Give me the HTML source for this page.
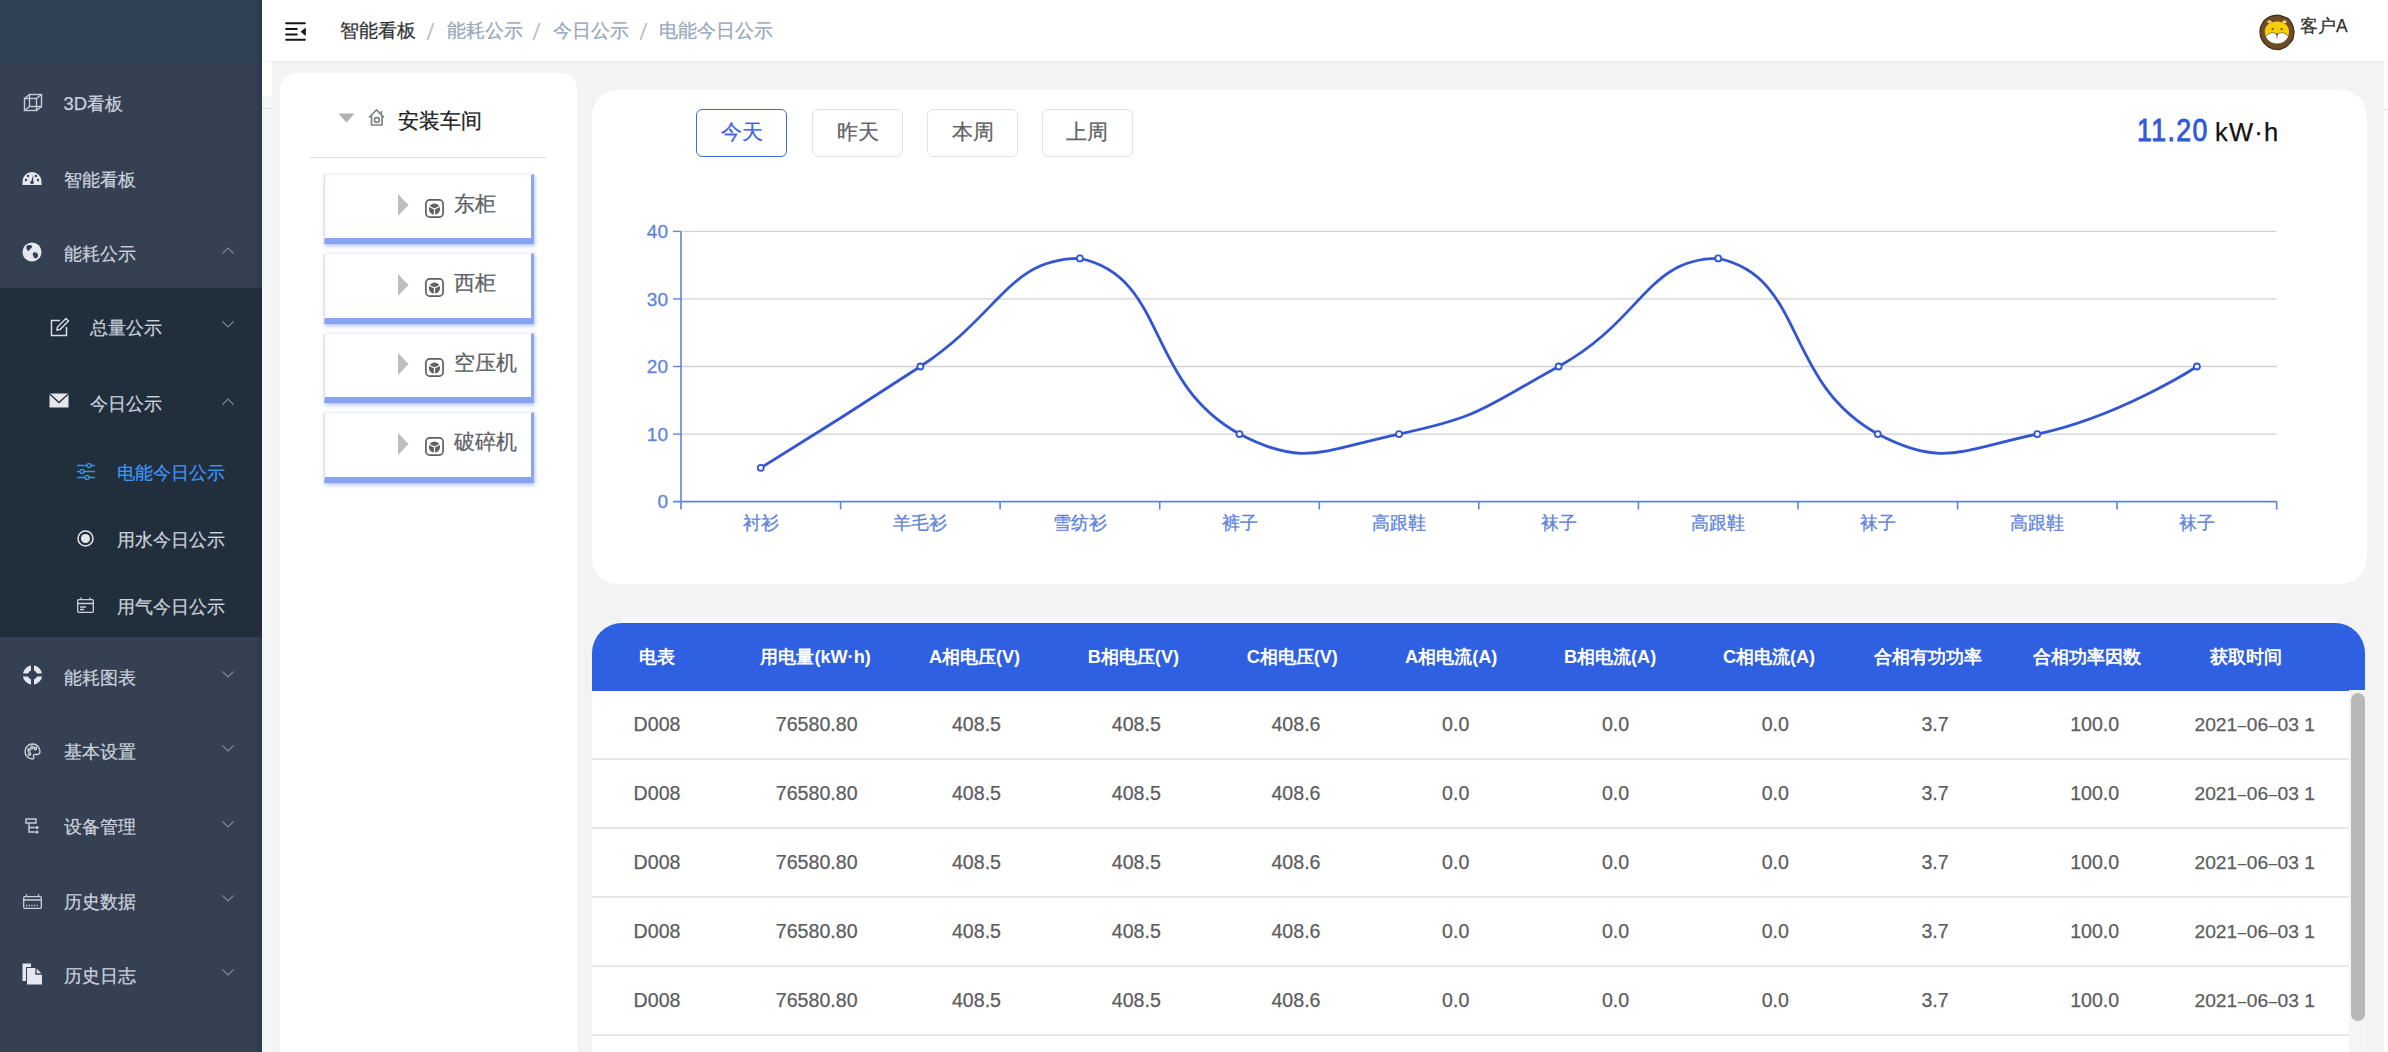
<!DOCTYPE html>
<html><head><meta charset="utf-8">
<style>
*{margin:0;padding:0;box-sizing:border-box}
html,body{width:2388px;height:1052px;overflow:hidden;background:#f3f3f3;font-family:"Liberation Sans",sans-serif}
body div{-webkit-text-stroke:0.25px currentColor}
.abs{position:absolute}
#side{position:absolute;left:0;top:0;width:262px;height:1052px;background:#354052;overflow:hidden}
#logo{position:absolute;left:0;top:0;width:262px;height:64px;background:#304156}
#sbr{position:absolute;left:256px;top:0;width:6px;height:1052px;background:linear-gradient(90deg,#2f3f57 0,#2f3f57 33%,#2e3b4a 34%,#2e3b4a 100%)}
#sub{position:absolute;left:0;top:287.5px;width:262px;height:349px;background:#212e3c}
#subr{position:absolute;left:256px;top:287.5px;width:6px;height:349px;background:#262c3c}
.mt{position:absolute;font-size:18.4px;line-height:25px;white-space:nowrap}
#header{position:absolute;left:262px;top:0;width:2126px;height:61px;background:#fff;box-shadow:0 1px 3px rgba(0,21,41,0.05)}
.bc{position:absolute;top:18px;font-size:18.67px;line-height:25px;white-space:nowrap;color:#97a8be}
.card{position:absolute;background:#fff}
.node{position:absolute;left:324px;width:210px;height:70.5px;background:#fff;border-left:1px solid #d6d8f5;border-top:1px solid #f0f0f2;border-right:3px solid #8ba5f3;border-bottom:6px solid #86a2f1;box-shadow:1px 2px 4px rgba(110,145,240,0.55)}
.nt{position:absolute;left:454px;font-size:21.33px;line-height:28px;color:#606266;white-space:nowrap}
.btn{position:absolute;top:108.5px;width:91px;height:48.5px;border:1.5px solid #e1e2e5;border-radius:6px;background:#fff;font-size:21.33px;line-height:45px;text-align:center;color:#606266}
.btn.on{border:1.8px solid #4169dd;color:#3d64dc;line-height:44.9px}
.chart{position:absolute;left:0;top:0}
.yl{font-size:19px;fill:#5f84dc;stroke:#5f84dc;stroke-width:0.3px;text-anchor:end;font-family:"Liberation Sans",sans-serif}
.xl{font-size:18px;fill:#5f84dc;stroke:#5f84dc;stroke-width:0.3px;text-anchor:middle;font-family:"Liberation Sans",sans-serif}
#thead{position:absolute;left:592px;top:623.4px;width:1773px;height:67.5px;background:#2f60e1;border-radius:30px 30px 0 0}
.th{position:absolute;top:644.5px;width:159px;text-align:center;font-size:18.1px;line-height:25px;font-weight:bold;color:#fff;white-space:nowrap;-webkit-text-stroke:0}
.td{position:absolute;width:159px;text-align:center;font-size:19.6px;line-height:25px;color:#5c5d60;white-space:nowrap}
.dash{font-size:15px;margin:0 0.6px;position:relative;top:-1px}
.rline{position:absolute;left:592px;width:1757px;height:1.6px;background:#e8e8e9}
</style></head><body>
<div id="side">
<div id="logo"></div>
<div id="sbr"></div>
<div id="sub"></div>
<div id="subr"></div>
<div class="mt" style="left:63.5px;top:90.5px;color:#c9d1dc">3D看板</div>
<div class="abs" style="left:23.0px;top:93.0px;line-height:0"><svg width="20" height="20" viewBox="0 0 20 20"><g fill="none" stroke="#c5ceda" stroke-width="1.4"><rect x="1.5" y="5.5" width="12" height="12"/><rect x="6.5" y="1.5" width="12" height="12"/><path d="M1.5 5.5 L6.5 1.5 M13.5 5.5 L18.5 1.5 M1.5 17.5 L6.5 13.5 M13.5 17.5 L18.5 13.5"/></g></svg></div>
<div class="mt" style="left:63.5px;top:167.0px;color:#c9d1dc">智能看板</div>
<div class="abs" style="left:22.0px;top:171.0px;line-height:0"><svg width="20" height="16" viewBox="0 0 20 16"><path d="M10 1 A9.5 9.5 0 0 0 0.5 10.5 L0.5 14 L19.5 14 L19.5 10.5 A9.5 9.5 0 0 0 10 1 Z" fill="#e4e8ee"/><g fill="#354052"><circle cx="4" cy="9" r="1.2"/><circle cx="6" cy="5" r="1.2"/><circle cx="14" cy="5" r="1.2"/><circle cx="16" cy="9" r="1.2"/><path d="M11.5 3.5 L9 11 L11 11.5 Z"/><circle cx="10" cy="11.5" r="1.8"/></g></svg></div>
<div class="mt" style="left:63.5px;top:240.5px;color:#c9d1dc">能耗公示</div>
<div class="abs" style="left:22.0px;top:242.0px;line-height:0"><svg width="20" height="20" viewBox="0 0 20 20"><circle cx="10" cy="10" r="9.5" fill="#e4e8ee"/><path d="M4.5 4 C6 2.5 9 2.5 10 4 C10.5 5.5 8.5 6.5 7.5 8 C6.5 9.5 5 8.5 4.5 7 Z M11.5 10.5 C13.5 9.5 16.5 11 16 14 C15.5 16.5 13 17 12 15.5 C11 14 10 11.5 11.5 10.5 Z" fill="#354052"/></svg></div>
<svg class="abs" style="left:221px;top:246.0px" width="14" height="9"><path d="M1.5 7.5 L7 2 L12.5 7.5" fill="none" stroke="#7d8899" stroke-width="1.2"/></svg>
<div class="mt" style="left:89.5px;top:314.5px;color:#c9d1dc">总量公示</div>
<div class="abs" style="left:49.5px;top:317.0px;line-height:0"><svg width="20" height="20" viewBox="0 0 20 20"><g fill="none" stroke="#d5dce5" stroke-width="1.5"><path d="M10 3.5 H1.5 V18.5 H16.5 V10"/><path d="M7 13 L7.5 10 L16 1.5 L18.5 4 L10 12.5 Z"/></g></svg></div>
<svg class="abs" style="left:221px;top:320.0px" width="14" height="9"><path d="M1.5 1.5 L7 7 L12.5 1.5" fill="none" stroke="#7d8899" stroke-width="1.2"/></svg>
<div class="mt" style="left:89.5px;top:391.0px;color:#c9d1dc">今日公示</div>
<div class="abs" style="left:49.0px;top:393.0px;line-height:0"><svg width="20" height="15" viewBox="0 0 20 15"><path d="M0.5 0.5 H19.5 V14.5 H0.5 Z" fill="#e4e8ee"/><path d="M0.5 0.8 L10 9.5 L19.5 0.8" fill="none" stroke="#212e3c" stroke-width="1.3"/></svg></div>
<svg class="abs" style="left:221px;top:396.5px" width="14" height="9"><path d="M1.5 7.5 L7 2 L12.5 7.5" fill="none" stroke="#7d8899" stroke-width="1.2"/></svg>
<div class="mt" style="left:116.5px;top:459.5px;color:#3d95f2">电能今日公示</div>
<div class="abs" style="left:75.5px;top:463.0px;line-height:0"><svg width="20" height="17" viewBox="0 0 20 17"><g stroke="#3a8ff0" stroke-width="1.4" fill="#212e3c"><path d="M1 2.5 H19 M1 8.5 H19 M1 14.5 H19"/><circle cx="13" cy="2.5" r="2"/><circle cx="6" cy="8.5" r="2"/><circle cx="11" cy="14.5" r="2"/></g></svg></div>
<div class="mt" style="left:116.5px;top:526.5px;color:#c9d1dc">用水今日公示</div>
<div class="abs" style="left:77.0px;top:530.0px;line-height:0"><svg width="17" height="17" viewBox="0 0 17 17"><circle cx="8.5" cy="8.5" r="7.5" fill="none" stroke="#e4e8ee" stroke-width="1.5"/><circle cx="8.5" cy="8.5" r="4.5" fill="#e4e8ee"/></svg></div>
<div class="mt" style="left:116.5px;top:593.5px;color:#c9d1dc">用气今日公示</div>
<div class="abs" style="left:77.0px;top:597.0px;line-height:0"><svg width="17" height="16" viewBox="0 0 17 16"><g fill="none" stroke="#c8d0dc" stroke-width="1.3"><rect x="0.7" y="2.7" width="15.6" height="12.6" rx="1"/><path d="M0.7 6.5 H16.3 M3 10 H9 M3 12.5 H7 M4 0.5 V3 M13 0.5 V3"/></g></svg></div>
<div class="mt" style="left:63.5px;top:664.5px;color:#c9d1dc">能耗图表</div>
<div class="abs" style="left:21.5px;top:665.0px;line-height:0"><svg width="21" height="20" viewBox="0 0 21 20"><circle cx="10.5" cy="10" r="7.2" fill="none" stroke="#e4e8ee" stroke-width="5"/><path d="M10.5 0 V20 M0 10 H21" stroke="#354052" stroke-width="3"/></svg></div>
<svg class="abs" style="left:221px;top:670.0px" width="14" height="9"><path d="M1.5 1.5 L7 7 L12.5 1.5" fill="none" stroke="#7d8899" stroke-width="1.2"/></svg>
<div class="mt" style="left:63.5px;top:738.5px;color:#c9d1dc">基本设置</div>
<div class="abs" style="left:24.0px;top:742.5px;line-height:0"><svg width="17" height="17" viewBox="0 0 17 17"><g fill="none" stroke="#c8d0dc" stroke-width="1.4"><path d="M8.5 1 A7.5 7.5 0 1 0 8.5 16 C10 16 10 14.5 9.5 13.5 C9 12.5 10 11.5 11 11.5 H13 A3 3 0 0 0 16 8.5 A7.5 7.5 0 0 0 8.5 1 Z"/><circle cx="5" cy="7" r="1.2"/><circle cx="8" cy="4.5" r="1.2"/><circle cx="11.5" cy="5.5" r="1.2"/><circle cx="5.5" cy="11" r="1.2"/></g></svg></div>
<svg class="abs" style="left:221px;top:744.0px" width="14" height="9"><path d="M1.5 1.5 L7 7 L12.5 1.5" fill="none" stroke="#7d8899" stroke-width="1.2"/></svg>
<div class="mt" style="left:63.5px;top:814.0px;color:#c9d1dc">设备管理</div>
<div class="abs" style="left:25.0px;top:818.0px;line-height:0"><svg width="16" height="17" viewBox="0 0 16 17"><g fill="none" stroke="#c8d0dc" stroke-width="1.4"><path d="M1 1 H11 V5 H1 Z"/><path d="M4 5 V14 H10 M4 9.5 H10"/></g><circle cx="12" cy="9.5" r="1.6" fill="#c8d0dc"/><circle cx="12" cy="14" r="1.6" fill="#c8d0dc"/></svg></div>
<svg class="abs" style="left:221px;top:819.5px" width="14" height="9"><path d="M1.5 1.5 L7 7 L12.5 1.5" fill="none" stroke="#7d8899" stroke-width="1.2"/></svg>
<div class="mt" style="left:63.5px;top:888.5px;color:#c9d1dc">历史数据</div>
<div class="abs" style="left:23.0px;top:894.0px;line-height:0"><svg width="19" height="15" viewBox="0 0 19 15"><g fill="none" stroke="#c8d0dc" stroke-width="1.3"><rect x="0.7" y="2.7" width="17.6" height="11.6" rx="1"/><path d="M0.7 6 H18.3 M3.5 0.3 V3 M15.5 0.3 V3"/><path d="M3 11.5 H16" stroke-dasharray="1.3 1.3"/></g></svg></div>
<svg class="abs" style="left:221px;top:894.0px" width="14" height="9"><path d="M1.5 1.5 L7 7 L12.5 1.5" fill="none" stroke="#7d8899" stroke-width="1.2"/></svg>
<div class="mt" style="left:63.5px;top:962.5px;color:#c9d1dc">历史日志</div>
<div class="abs" style="left:22.0px;top:963.0px;line-height:0"><svg width="21" height="22" viewBox="0 0 21 22"><path d="M0.5 0.5 H9 V4 H4 V18 H0.5 Z" fill="#e4e8ee"/><path d="M5 5 H14 L20 11 V21.5 H5 Z" fill="#e4e8ee"/><path d="M14 5 V11 H20" fill="none" stroke="#354052" stroke-width="1.3"/></svg></div>
<svg class="abs" style="left:221px;top:968.0px" width="14" height="9"><path d="M1.5 1.5 L7 7 L12.5 1.5" fill="none" stroke="#7d8899" stroke-width="1.2"/></svg>
</div>
<div class="abs" style="left:262px;top:61px;width:10px;height:35px;background:#fdfdfd"></div>
<div class="abs" style="left:262px;top:96px;width:10px;height:956px;background:#f5f6f8"></div>
<div class="abs" style="left:262px;top:107.5px;width:10px;height:1.2px;background:#d8dce3"></div>
<div class="abs" style="left:2384px;top:61px;width:4px;height:991px;background:#fff"></div>
<div class="abs" style="left:2384px;top:108.5px;width:4px;height:1.2px;background:#d8dce3"></div>
<div id="header">
<svg class="abs" style="left:23px;top:22px" width="22" height="19" viewBox="0 0 22 19"><g fill="#151515"><rect x="0.2" y="0.3" width="20.6" height="1.9" rx="0.9"/><rect x="0.2" y="6.1" width="12.6" height="1.9" rx="0.9"/><rect x="0.2" y="11.5" width="12.6" height="1.9" rx="0.9"/><rect x="0.2" y="16.8" width="20.6" height="1.9" rx="0.9"/><path d="M20.8 5.4 L15.6 9.7 L20.8 14 Z"/></g></svg>
</div>
<div class="bc" style="left:340px;color:#303133">智能看板</div>
<svg class="abs" style="left:420px;top:18px" width="20" height="26"><path d="M13.6 5 L7.4 22" stroke="#c0c4cc" stroke-width="2"/></svg>
<div class="bc" style="left:447px">能耗公示</div>
<svg class="abs" style="left:526px;top:18px" width="20" height="26"><path d="M13.6 5 L7.4 22" stroke="#c0c4cc" stroke-width="2"/></svg>
<div class="bc" style="left:552.5px">今日公示</div>
<svg class="abs" style="left:633px;top:18px" width="20" height="26"><path d="M13.6 5 L7.4 22" stroke="#c0c4cc" stroke-width="2"/></svg>
<div class="bc" style="left:659px">电能今日公示</div>
<svg class="abs" style="left:2258px;top:14px" width="38" height="38" viewBox="0 0 38 38">
<path d="M19 1.2 C22 1 24 2.5 26.5 3 C29 3.5 31.5 5.5 33 8 C34.5 10.5 35.5 12.5 35.5 15 C36.5 17 36 19.5 35.5 21.5 C35.5 24.5 34 27 32 29 C30 31.5 27.5 33.5 24.5 34.5 C22.5 35.5 20.5 36 18.5 35.5 C15.5 35.5 13 34.5 10.5 33 C8 31.5 5.5 29 4 26 C2.5 23.5 2 21 2.2 18.5 C1.5 15.5 2.5 12.5 4 10 C5.5 7 8 4.5 11 3 C13.5 1.8 16 1.5 19 1.2 Z" fill="#6f4c29" stroke="#3e2a16" stroke-width="1.2"/>
<ellipse cx="11.5" cy="7.8" rx="2.2" ry="1.5" fill="#e9d27a"/><ellipse cx="26.5" cy="7.8" rx="2.2" ry="1.5" fill="#e9d27a"/>
<path d="M6.8 17.5 C6.8 11.5 12 7.6 19 7.6 C26 7.6 31 11.5 31 17.5 C31 25 26 29.8 19 29.8 C12 29.8 6.8 25 6.8 17.5 Z" fill="#f6cf00"/>
<path d="M7.6 22.5 C11 18.5 15 17.5 19 20.5 C23 17.5 27 18.5 30.4 22.5 C28 27.5 24 29.8 19 29.8 C14 29.8 10 27.5 7.6 22.5 Z" fill="#fff" stroke="#3f4a1a" stroke-width="0.6"/>
<circle cx="14.6" cy="15" r="1.1" fill="#6a3b10"/><circle cx="23.6" cy="15" r="1.1" fill="#6a3b10"/>
<circle cx="19" cy="20.6" r="1" fill="#333"/><path d="M19 21 V24.5" stroke="#777" stroke-width="1"/>
</svg>
<div class="abs" style="left:2300px;top:14px;font-size:17.5px;line-height:25px;color:#303133">客户A</div>

<div class="card" style="left:279.5px;top:73px;width:297px;height:1000px;border-radius:16px"></div>
<svg class="abs" style="left:337.5px;top:113px" width="18" height="10"><path d="M0.5 0.5 L16.5 0.5 L9.3 8.8 Q8.5 9.6 7.7 8.8 Z" fill="#b0b0b0"/></svg>
<svg class="abs" style="left:368px;top:108px" width="19" height="19" viewBox="0 0 19 19"><g fill="none" stroke="#808286" stroke-width="1.7"><path d="M1 9.5 L8.5 2 L16 9.5 M3.5 7.5 V17 H14 V7.5"/><circle cx="8.8" cy="12" r="2.4"/><path d="M13.3 3 V6.5"/></g></svg>
<div class="abs" style="left:398px;top:107px;font-size:21.33px;line-height:28px;color:#222;white-space:nowrap">安装车间</div>
<div class="abs" style="left:310px;top:156.5px;width:236px;height:1.4px;background:#dcdfe6"></div>
<div class="node" style="top:173.5px"></div>
<svg class="abs" style="left:398px;top:194.0px" width="11" height="22"><path d="M0 0 L10.5 11 L0 22 Z" fill="#bdbec2"/></svg>
<svg class="abs" style="left:425px;top:198.5px" width="19" height="19" viewBox="0 0 19 19"><rect x="0.9" y="0.9" width="17.2" height="17.2" rx="3.8" fill="none" stroke="#5f6064" stroke-width="1.7"/><circle cx="9.5" cy="10" r="5.6" fill="#5f6064"/><path d="M9.5 10 L9.5 16.5 M9.5 10 L3.8 7.2 M9.5 10 L15.2 7.2" stroke="#fff" stroke-width="1.2"/></svg>
<div class="nt" style="top:189.5px">东柜</div>
<div class="node" style="top:253.0px"></div>
<svg class="abs" style="left:398px;top:273.5px" width="11" height="22"><path d="M0 0 L10.5 11 L0 22 Z" fill="#bdbec2"/></svg>
<svg class="abs" style="left:425px;top:278.0px" width="19" height="19" viewBox="0 0 19 19"><rect x="0.9" y="0.9" width="17.2" height="17.2" rx="3.8" fill="none" stroke="#5f6064" stroke-width="1.7"/><circle cx="9.5" cy="10" r="5.6" fill="#5f6064"/><path d="M9.5 10 L9.5 16.5 M9.5 10 L3.8 7.2 M9.5 10 L15.2 7.2" stroke="#fff" stroke-width="1.2"/></svg>
<div class="nt" style="top:269.0px">西柜</div>
<div class="node" style="top:332.5px"></div>
<svg class="abs" style="left:398px;top:353.0px" width="11" height="22"><path d="M0 0 L10.5 11 L0 22 Z" fill="#bdbec2"/></svg>
<svg class="abs" style="left:425px;top:357.5px" width="19" height="19" viewBox="0 0 19 19"><rect x="0.9" y="0.9" width="17.2" height="17.2" rx="3.8" fill="none" stroke="#5f6064" stroke-width="1.7"/><circle cx="9.5" cy="10" r="5.6" fill="#5f6064"/><path d="M9.5 10 L9.5 16.5 M9.5 10 L3.8 7.2 M9.5 10 L15.2 7.2" stroke="#fff" stroke-width="1.2"/></svg>
<div class="nt" style="top:348.5px">空压机</div>
<div class="node" style="top:412.0px"></div>
<svg class="abs" style="left:398px;top:432.5px" width="11" height="22"><path d="M0 0 L10.5 11 L0 22 Z" fill="#bdbec2"/></svg>
<svg class="abs" style="left:425px;top:437.0px" width="19" height="19" viewBox="0 0 19 19"><rect x="0.9" y="0.9" width="17.2" height="17.2" rx="3.8" fill="none" stroke="#5f6064" stroke-width="1.7"/><circle cx="9.5" cy="10" r="5.6" fill="#5f6064"/><path d="M9.5 10 L9.5 16.5 M9.5 10 L3.8 7.2 M9.5 10 L15.2 7.2" stroke="#fff" stroke-width="1.2"/></svg>
<div class="nt" style="top:428.0px">破碎机</div>

<div class="card" style="left:592px;top:90px;width:1775px;height:494px;border-radius:26px"></div>
<div class="btn on" style="left:696px">今天</div>
<div class="btn" style="left:812px">昨天</div>
<div class="btn" style="left:927px">本周</div>
<div class="btn" style="left:1041.5px">上周</div>
<div class="abs" style="left:2136.5px;top:110.5px;font-size:31px;line-height:40px;color:#2f5ad8;-webkit-text-stroke:0.9px #2f5ad8;transform:scaleX(0.86);transform-origin:0 0;letter-spacing:1.6px">11.20</div>
<div class="abs" style="left:2215px;top:115px;font-size:25.5px;line-height:34px;color:#111;letter-spacing:1.2px">kW·h</div>
<svg class="chart" width="2388" height="1052" viewBox="0 0 2388 1052">
<line x1="681.0" y1="434.1" x2="2276.7" y2="434.1" stroke="#d2d2d2" stroke-width="1.4"/>
<line x1="673.0" y1="434.1" x2="681.0" y2="434.1" stroke="#6183dc" stroke-width="1.4"/>
<text x="668.0" y="440.7" class="yl">10</text>
<line x1="681.0" y1="366.5" x2="2276.7" y2="366.5" stroke="#d2d2d2" stroke-width="1.4"/>
<line x1="673.0" y1="366.5" x2="681.0" y2="366.5" stroke="#6183dc" stroke-width="1.4"/>
<text x="668.0" y="373.1" class="yl">20</text>
<line x1="681.0" y1="298.9" x2="2276.7" y2="298.9" stroke="#d2d2d2" stroke-width="1.4"/>
<line x1="673.0" y1="298.9" x2="681.0" y2="298.9" stroke="#6183dc" stroke-width="1.4"/>
<text x="668.0" y="305.6" class="yl">30</text>
<line x1="681.0" y1="231.4" x2="2276.7" y2="231.4" stroke="#d2d2d2" stroke-width="1.4"/>
<line x1="673.0" y1="231.4" x2="681.0" y2="231.4" stroke="#6183dc" stroke-width="1.4"/>
<text x="668.0" y="238.0" class="yl">40</text>
<text x="668.0" y="508.2" class="yl">0</text>
<line x1="681.0" y1="231.4" x2="681.0" y2="509.6" stroke="#6183dc" stroke-width="1.6"/>
<line x1="673.0" y1="501.6" x2="2276.7" y2="501.6" stroke="#6183dc" stroke-width="1.6"/>
<line x1="840.6" y1="501.6" x2="840.6" y2="509.6" stroke="#6183dc" stroke-width="1.6"/>
<line x1="1000.1" y1="501.6" x2="1000.1" y2="509.6" stroke="#6183dc" stroke-width="1.6"/>
<line x1="1159.7" y1="501.6" x2="1159.7" y2="509.6" stroke="#6183dc" stroke-width="1.6"/>
<line x1="1319.3" y1="501.6" x2="1319.3" y2="509.6" stroke="#6183dc" stroke-width="1.6"/>
<line x1="1478.8" y1="501.6" x2="1478.8" y2="509.6" stroke="#6183dc" stroke-width="1.6"/>
<line x1="1638.4" y1="501.6" x2="1638.4" y2="509.6" stroke="#6183dc" stroke-width="1.6"/>
<line x1="1798.0" y1="501.6" x2="1798.0" y2="509.6" stroke="#6183dc" stroke-width="1.6"/>
<line x1="1957.6" y1="501.6" x2="1957.6" y2="509.6" stroke="#6183dc" stroke-width="1.6"/>
<line x1="2117.1" y1="501.6" x2="2117.1" y2="509.6" stroke="#6183dc" stroke-width="1.6"/>
<line x1="2276.7" y1="501.6" x2="2276.7" y2="509.6" stroke="#6183dc" stroke-width="1.6"/>
<text x="760.8" y="529.0" class="xl">衬衫</text>
<text x="920.4" y="529.0" class="xl">羊毛衫</text>
<text x="1079.9" y="529.0" class="xl">雪纺衫</text>
<text x="1239.5" y="529.0" class="xl">裤子</text>
<text x="1399.1" y="529.0" class="xl">高跟鞋</text>
<text x="1558.6" y="529.0" class="xl">袜子</text>
<text x="1718.2" y="529.0" class="xl">高跟鞋</text>
<text x="1877.8" y="529.0" class="xl">袜子</text>
<text x="2037.3" y="529.0" class="xl">高跟鞋</text>
<text x="2196.9" y="529.0" class="xl">袜子</text>
<path d="M760.78 467.83 C760.78 467.83 841.34 418.34 920.36 366.50 C1000.91 313.64 1008.41 258.42 1079.92 258.42 C1167.98 277.06 1144.08 381.54 1239.49 434.05 C1303.65 467.83 1322.57 450.24 1399.07 434.05 C1482.14 416.47 1483.09 408.07 1558.63 366.50 C1642.66 320.26 1646.69 258.42 1718.20 258.42 C1806.26 277.06 1782.36 381.54 1877.77 434.05 C1941.93 467.83 1960.85 450.24 2037.35 434.05 C2120.42 416.47 2196.91 366.50 2196.91 366.50" fill="none" stroke="#3455d2" stroke-width="2.8" stroke-linejoin="round"/>
<circle cx="760.78" cy="467.83" r="3" fill="#fff" stroke="#3455d2" stroke-width="1.8"/>
<circle cx="920.36" cy="366.50" r="3" fill="#fff" stroke="#3455d2" stroke-width="1.8"/>
<circle cx="1079.92" cy="258.42" r="3" fill="#fff" stroke="#3455d2" stroke-width="1.8"/>
<circle cx="1239.49" cy="434.05" r="3" fill="#fff" stroke="#3455d2" stroke-width="1.8"/>
<circle cx="1399.07" cy="434.05" r="3" fill="#fff" stroke="#3455d2" stroke-width="1.8"/>
<circle cx="1558.63" cy="366.50" r="3" fill="#fff" stroke="#3455d2" stroke-width="1.8"/>
<circle cx="1718.20" cy="258.42" r="3" fill="#fff" stroke="#3455d2" stroke-width="1.8"/>
<circle cx="1877.77" cy="434.05" r="3" fill="#fff" stroke="#3455d2" stroke-width="1.8"/>
<circle cx="2037.35" cy="434.05" r="3" fill="#fff" stroke="#3455d2" stroke-width="1.8"/>
<circle cx="2196.91" cy="366.50" r="3" fill="#fff" stroke="#3455d2" stroke-width="1.8"/>
</svg>

<div class="abs" style="left:622px;top:616.5px;width:1714px;height:7px;background:#f9f9f9"></div>
<div class="card" style="left:592px;top:650px;width:1773px;height:410px"></div>
<div id="thead"></div>
<div class="th" style="left:577.2px">电表</div>
<div class="th" style="left:736.1px">用电量(kW·h)</div>
<div class="th" style="left:895.0px">A相电压(V)</div>
<div class="th" style="left:1053.9px">B相电压(V)</div>
<div class="th" style="left:1212.8px">C相电压(V)</div>
<div class="th" style="left:1371.7px">A相电流(A)</div>
<div class="th" style="left:1530.6px">B相电流(A)</div>
<div class="th" style="left:1689.5px">C相电流(A)</div>
<div class="th" style="left:1848.4px">合相有功功率</div>
<div class="th" style="left:2007.3px">合相功率因数</div>
<div class="th" style="left:2166.2px">获取时间</div>
<div class="rline" style="top:758.2px"></div>
<div class="td" style="left:577.5px;top:712.0px">D008</div>
<div class="td" style="left:737.2px;top:712.0px">76580.80</div>
<div class="td" style="left:897.0px;top:712.0px">408.5</div>
<div class="td" style="left:1056.8px;top:712.0px">408.5</div>
<div class="td" style="left:1216.5px;top:712.0px">408.6</div>
<div class="td" style="left:1376.2px;top:712.0px">0.0</div>
<div class="td" style="left:1536.0px;top:712.0px">0.0</div>
<div class="td" style="left:1695.8px;top:712.0px">0.0</div>
<div class="td" style="left:1855.5px;top:712.0px">3.7</div>
<div class="td" style="left:2015.2px;top:712.0px">100.0</div>
<div class="td" style="left:2194.5px;top:712.2px;width:124px;text-align:left;overflow:hidden;font-size:19.2px">2021<span class="dash">–</span>06<span class="dash">–</span>03 1</div>
<div class="rline" style="top:827.2px"></div>
<div class="td" style="left:577.5px;top:781.0px">D008</div>
<div class="td" style="left:737.2px;top:781.0px">76580.80</div>
<div class="td" style="left:897.0px;top:781.0px">408.5</div>
<div class="td" style="left:1056.8px;top:781.0px">408.5</div>
<div class="td" style="left:1216.5px;top:781.0px">408.6</div>
<div class="td" style="left:1376.2px;top:781.0px">0.0</div>
<div class="td" style="left:1536.0px;top:781.0px">0.0</div>
<div class="td" style="left:1695.8px;top:781.0px">0.0</div>
<div class="td" style="left:1855.5px;top:781.0px">3.7</div>
<div class="td" style="left:2015.2px;top:781.0px">100.0</div>
<div class="td" style="left:2194.5px;top:781.2px;width:124px;text-align:left;overflow:hidden;font-size:19.2px">2021<span class="dash">–</span>06<span class="dash">–</span>03 1</div>
<div class="rline" style="top:896.2px"></div>
<div class="td" style="left:577.5px;top:850.0px">D008</div>
<div class="td" style="left:737.2px;top:850.0px">76580.80</div>
<div class="td" style="left:897.0px;top:850.0px">408.5</div>
<div class="td" style="left:1056.8px;top:850.0px">408.5</div>
<div class="td" style="left:1216.5px;top:850.0px">408.6</div>
<div class="td" style="left:1376.2px;top:850.0px">0.0</div>
<div class="td" style="left:1536.0px;top:850.0px">0.0</div>
<div class="td" style="left:1695.8px;top:850.0px">0.0</div>
<div class="td" style="left:1855.5px;top:850.0px">3.7</div>
<div class="td" style="left:2015.2px;top:850.0px">100.0</div>
<div class="td" style="left:2194.5px;top:850.2px;width:124px;text-align:left;overflow:hidden;font-size:19.2px">2021<span class="dash">–</span>06<span class="dash">–</span>03 1</div>
<div class="rline" style="top:965.2px"></div>
<div class="td" style="left:577.5px;top:919.0px">D008</div>
<div class="td" style="left:737.2px;top:919.0px">76580.80</div>
<div class="td" style="left:897.0px;top:919.0px">408.5</div>
<div class="td" style="left:1056.8px;top:919.0px">408.5</div>
<div class="td" style="left:1216.5px;top:919.0px">408.6</div>
<div class="td" style="left:1376.2px;top:919.0px">0.0</div>
<div class="td" style="left:1536.0px;top:919.0px">0.0</div>
<div class="td" style="left:1695.8px;top:919.0px">0.0</div>
<div class="td" style="left:1855.5px;top:919.0px">3.7</div>
<div class="td" style="left:2015.2px;top:919.0px">100.0</div>
<div class="td" style="left:2194.5px;top:919.2px;width:124px;text-align:left;overflow:hidden;font-size:19.2px">2021<span class="dash">–</span>06<span class="dash">–</span>03 1</div>
<div class="rline" style="top:1034.2px"></div>
<div class="td" style="left:577.5px;top:988.0px">D008</div>
<div class="td" style="left:737.2px;top:988.0px">76580.80</div>
<div class="td" style="left:897.0px;top:988.0px">408.5</div>
<div class="td" style="left:1056.8px;top:988.0px">408.5</div>
<div class="td" style="left:1216.5px;top:988.0px">408.6</div>
<div class="td" style="left:1376.2px;top:988.0px">0.0</div>
<div class="td" style="left:1536.0px;top:988.0px">0.0</div>
<div class="td" style="left:1695.8px;top:988.0px">0.0</div>
<div class="td" style="left:1855.5px;top:988.0px">3.7</div>
<div class="td" style="left:2015.2px;top:988.0px">100.0</div>
<div class="td" style="left:2194.5px;top:988.2px;width:124px;text-align:left;overflow:hidden;font-size:19.2px">2021<span class="dash">–</span>06<span class="dash">–</span>03 1</div>
<div class="rline" style="top:1103.2px"></div>
<div class="td" style="left:577.5px;top:1057.0px">D008</div>
<div class="td" style="left:737.2px;top:1057.0px">76580.80</div>
<div class="td" style="left:897.0px;top:1057.0px">408.5</div>
<div class="td" style="left:1056.8px;top:1057.0px">408.5</div>
<div class="td" style="left:1216.5px;top:1057.0px">408.6</div>
<div class="td" style="left:1376.2px;top:1057.0px">0.0</div>
<div class="td" style="left:1536.0px;top:1057.0px">0.0</div>
<div class="td" style="left:1695.8px;top:1057.0px">0.0</div>
<div class="td" style="left:1855.5px;top:1057.0px">3.7</div>
<div class="td" style="left:2015.2px;top:1057.0px">100.0</div>
<div class="td" style="left:2194.5px;top:1057.2px;width:124px;text-align:left;overflow:hidden;font-size:19.2px">2021<span class="dash">–</span>06<span class="dash">–</span>03 1</div>
<div class="abs" style="left:2348.5px;top:689.7px;width:16.5px;height:370px;background:#f5f5f5"></div>
<div class="abs" style="left:2350.5px;top:693px;width:14px;height:328px;background:#b8b8b8;border-radius:7px"></div>
</body></html>
